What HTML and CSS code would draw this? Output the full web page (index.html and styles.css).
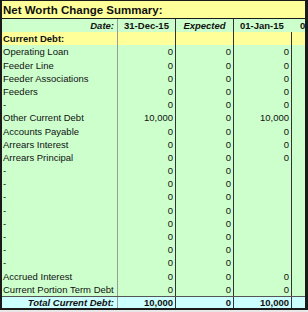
FILE: index.html
```html
<!DOCTYPE html>
<html>
<head>
<meta charset="utf-8">
<link rel="stylesheet" href="styles.css">
</head>
<body>
<div class="sheet">
  <div class="title">Net Worth Change Summary:</div>
  <div class="row head">
    <div class="lab bi">Date:</div>
    <div class="v ctr b">31-Dec-15</div>
    <div class="v ctr bi">Expected</div>
    <div class="v b c3h">01-Jan-15</div>
    <div class="v b c4h">01-Feb-15</div>
  </div>
  <div class="row yel">
    <div class="lab b">Current Debt:</div>
    <div class="v"></div><div class="v"></div><div class="v"></div><div class="v4"></div>
  </div>
  <div class="row"><div class="lab">Operating Loan</div><div class="v">0</div><div class="v">0</div><div class="v">0</div><div class="v4"></div></div>
  <div class="row"><div class="lab">Feeder Line</div><div class="v">0</div><div class="v">0</div><div class="v">0</div><div class="v4"></div></div>
  <div class="row"><div class="lab">Feeder Associations</div><div class="v">0</div><div class="v">0</div><div class="v">0</div><div class="v4"></div></div>
  <div class="row"><div class="lab">Feeders</div><div class="v">0</div><div class="v">0</div><div class="v">0</div><div class="v4"></div></div>
  <div class="row"><div class="lab">-</div><div class="v">0</div><div class="v">0</div><div class="v">0</div><div class="v4"></div></div>
  <div class="row"><div class="lab">Other Current Debt</div><div class="v">10,000</div><div class="v">0</div><div class="v">10,000</div><div class="v4"></div></div>
  <div class="row"><div class="lab">Accounts Payable</div><div class="v">0</div><div class="v">0</div><div class="v">0</div><div class="v4"></div></div>
  <div class="row"><div class="lab">Arrears Interest</div><div class="v">0</div><div class="v">0</div><div class="v">0</div><div class="v4"></div></div>
  <div class="row"><div class="lab">Arrears Principal</div><div class="v">0</div><div class="v">0</div><div class="v">0</div><div class="v4"></div></div>
  <div class="row"><div class="lab">-</div><div class="v">0</div><div class="v">0</div><div class="v"></div><div class="v4"></div></div>
  <div class="row"><div class="lab">-</div><div class="v">0</div><div class="v">0</div><div class="v"></div><div class="v4"></div></div>
  <div class="row"><div class="lab">-</div><div class="v">0</div><div class="v">0</div><div class="v"></div><div class="v4"></div></div>
  <div class="row"><div class="lab">-</div><div class="v">0</div><div class="v">0</div><div class="v"></div><div class="v4"></div></div>
  <div class="row"><div class="lab">-</div><div class="v">0</div><div class="v">0</div><div class="v"></div><div class="v4"></div></div>
  <div class="row"><div class="lab">-</div><div class="v">0</div><div class="v">0</div><div class="v"></div><div class="v4"></div></div>
  <div class="row"><div class="lab">-</div><div class="v">0</div><div class="v">0</div><div class="v"></div><div class="v4"></div></div>
  <div class="row"><div class="lab">-</div><div class="v">0</div><div class="v">0</div><div class="v"></div><div class="v4"></div></div>
  <div class="row"><div class="lab">Accrued Interest</div><div class="v">0</div><div class="v">0</div><div class="v">0</div><div class="v4"></div></div>
  <div class="row"><div class="lab">Current Portion Term Debt</div><div class="v">0</div><div class="v">0</div><div class="v">0</div><div class="v4"></div></div>
  <div class="row total">
    <div class="lab bi">Total Current Debt:</div>
    <div class="v b">10,000</div><div class="v b">0</div><div class="v b">10,000</div><div class="v4"></div>
  </div>
</div>
</body>
</html>
```
FILE: styles.css
```css
html, body {
  margin: 0;
  padding: 0;
  background: #e8e8e8;
}
.sheet {
  width: 308px;
  height: 310px;
  box-sizing: border-box;
  border-left: 2px solid #1a1a1a;
  border-top: 1px solid #1a1a1a;
  border-right: 3px solid #1a1a1a;
  border-bottom: 2px solid #1a1a1a;
  overflow: hidden;
  font-family: "Liberation Sans", Arial, sans-serif;
  color: #111;
  background: #ccffcc;
}
.title {
  height: 17px;
  line-height: 18px;
  background: #ffff99;
  border-bottom: 1px solid #1a1a1a;
  font-weight: bold;
  font-size: 11.5px;
  padding-left: 1px;
  white-space: nowrap;
}
.row {
  display: grid;
  grid-template-columns: 116px 58px 58px 58px 1fr;
  height: 13.2px;
  line-height: 13.2px;
  font-size: 9.5px;
  white-space: nowrap;
}
.row > div {
  overflow: visible;
}
.lab {
  border-right: 1px solid #9a9a9a;
  padding-left: 1px;
}
.v {
  border-right: 1px solid #333;
  text-align: right;
  padding-right: 2px;
}
.v4 {
  border: 0;
}
.b { font-weight: bold; }
.bi { font-weight: bold; font-style: italic; }
.head .lab { text-align: right; padding-right: 3px; padding-left: 0; }
.ctr { text-align: center; padding-right: 0; }
.c3h { text-align: left; padding-left: 6px; border-right: 0; }
.c4h { text-align: left; padding-left: 8px; overflow: hidden; }
.yel { background: #ffff99; }
.total {
  background: #ccffff;
  height: 12.2px;
  line-height: 12.2px;
  border-top: 1px solid #555;
}
.total .lab { text-align: right; padding-right: 3px; }
```
